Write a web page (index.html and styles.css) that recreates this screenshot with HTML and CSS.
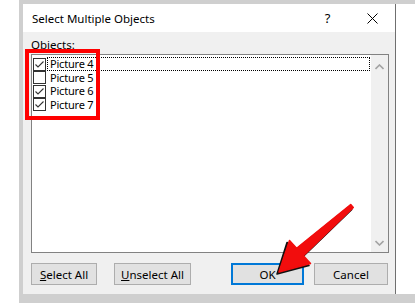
FILE: index.html
```html
<!DOCTYPE html>
<html lang="en">
<head>
    <meta charset="UTF-8">
    <title>Select Multiple Objects</title>
    <link rel="stylesheet" href="styles.css">
</head>
<body>
    <div class="screen">
        <div class="frame">
            <div class="dialog">
                <div class="titlebar">
                    <span class="title">Select Multiple Objects</span>
                    <span class="help">?</span>
                    <span class="close">
                        <svg width="11" height="11" viewBox="0 0 11 11"><path d="M0.5 0.5 L10.5 10.5 M10.5 0.5 L0.5 10.5" stroke="#000" stroke-width="1"/></svg>
                    </span>
                </div>
                <div class="content">
                    <div class="label">Objects:</div>
                    <div class="listbox">
                        <ul class="items">
                            <li class="item focused"><span class="check on"></span><span class="name">Picture 4</span></li>
                            <li class="item"><span class="check"></span><span class="name">Picture 5</span></li>
                            <li class="item"><span class="check on"></span><span class="name">Picture 6</span></li>
                            <li class="item"><span class="check on"></span><span class="name">Picture 7</span></li>
                        </ul>
                        <div class="scrollbar">
                            <svg width="9" height="6" viewBox="0 0 9 6"><path d="M0.5 5 L4.5 1 L8.5 5" fill="none" stroke="#a3a3a3" stroke-width="1.6"/></svg>
                            <svg width="9" height="6" viewBox="0 0 9 6"><path d="M0.5 1 L4.5 5 L8.5 1" fill="none" stroke="#a3a3a3" stroke-width="1.6"/></svg>
                        </div>
                    </div>
                    <div class="buttons">
                        <button class="btn btn-select"><u>S</u>elect All</button>
                        <button class="btn btn-unselect"><u>U</u>nselect All</button>
                        <button class="btn btn-ok">OK</button>
                        <button class="btn btn-cancel">Cancel</button>
                    </div>
                </div>
            </div>
            <div class="outside"></div>
        </div>

        <!-- annotations drawn over the screenshot -->
        <div class="highlight"></div>
        <svg class="pointer" width="415" height="303" viewBox="0 0 415 303">
            <polygon points="349.2,206.5 351.8,209.5 301.9,257.7 309,265.6 277,274 287,242.4 295.1,250.3" fill="#111" stroke="#111" stroke-width="1.5" stroke-linejoin="round"/>
            <polygon points="350.7,204.5 353.3,207.5 303.4,255.7 310.5,263.6 279,272 289.5,240.4 296.6,248.3" fill="#f20d0d" stroke="#f20d0d" stroke-width="1.5" stroke-linejoin="round"/>
        </svg>
    </div>
</body>
</html>
```

FILE: styles.css
```css
* {
    box-sizing: border-box;
    margin: 0;
    padding: 0;
}

body {
    font-family: "Noto Sans", "Liberation Sans", sans-serif;
    font-size: 11.5px;
    color: #000;
    background: #fff;
}

.screen {
    position: relative;
    width: 415px;
    height: 303px;
    padding-left: 19px;
    display: flex;
    background: #fff;
}

.frame {
    flex: 1;
    display: flex;
    border-top: 4px solid #cfcfcf;
    border-left: 4px solid #cfcfcf;
    border-bottom: 9px solid #cfcfcf;
}

.dialog {
    width: 373px;
    display: flex;
    flex-direction: column;
    border-right: 1px solid #6f6f6f;
}

.outside {
    flex: 1;
    background: #fff;
}

.titlebar {
    height: 28px;
    display: flex;
    align-items: center;
    padding-left: 9px;
    background: #fff;
}

.title {
    font-size: 11.5px;
}

.help {
    margin-left: auto;
    width: 45px;
    text-align: center;
    font-size: 13px;
}

.close {
    width: 45px;
    display: flex;
    justify-content: center;
}

.content {
    flex: 1;
    display: flex;
    flex-direction: column;
    padding: 6px 6px 9px 8px;
    background: #f0f0f0;
}

.label {
    height: 16px;
    line-height: 14px;
}

.listbox {
    height: 199px;
    display: flex;
    border: 1px solid #828282;
    background: #fff;
}

.items {
    flex: 1;
    list-style: none;
    padding: 2px 1px 0 1px;
}

.item {
    height: 13.5px;
    display: flex;
    align-items: center;
}

.check {
    width: 13px;
    height: 13px;
    border: 1px solid #333;
    background: #fff;
    flex: none;
    margin-top: 1px;
}

.check.on {
    background: #fff url("data:image/svg+xml,%3Csvg xmlns='http://www.w3.org/2000/svg' width='11' height='11'%3E%3Cpath d='M1.5 5.5 L4 8 L9.5 2.5' fill='none' stroke='%23333' stroke-width='1.1'/%3E%3C/svg%3E") no-repeat center;
}

.name {
    flex: 1;
    height: 13.5px;
    font-size: 11px;
    letter-spacing: -0.2px;
    line-height: 13px;
    padding-left: 3px;
    margin-left: 1px;
    white-space: nowrap;
}

.item.focused .name {
    outline: 1px dotted #000;
    outline-offset: -1px;
}

.scrollbar {
    width: 17px;
    display: flex;
    flex-direction: column;
    justify-content: space-between;
    align-items: center;
    padding: 9px 0 6px;
    background: #f0f0f0;
}

.buttons {
    display: flex;
    margin-top: auto;
}

.btn {
    height: 22px;
    font-family: inherit;
    font-size: 11.5px;
    color: #000;
    background: #e1e1e1;
    border: 1px solid #adadad;
}

.btn-select {
    width: 66px;
}

.btn-unselect {
    width: 77px;
    margin-left: 17px;
}

.btn-ok {
    width: 73px;
    margin-left: 40px;
    border: 2px solid #0078d7;
}

.btn-cancel {
    width: 74px;
    margin-left: 10px;
}

.highlight {
    position: absolute;
    left: 25px;
    top: 49px;
    width: 75px;
    height: 71px;
    border: 4px solid #f00;
}

.pointer {
    position: absolute;
    left: 0;
    top: 0;
    pointer-events: none;
}
```
